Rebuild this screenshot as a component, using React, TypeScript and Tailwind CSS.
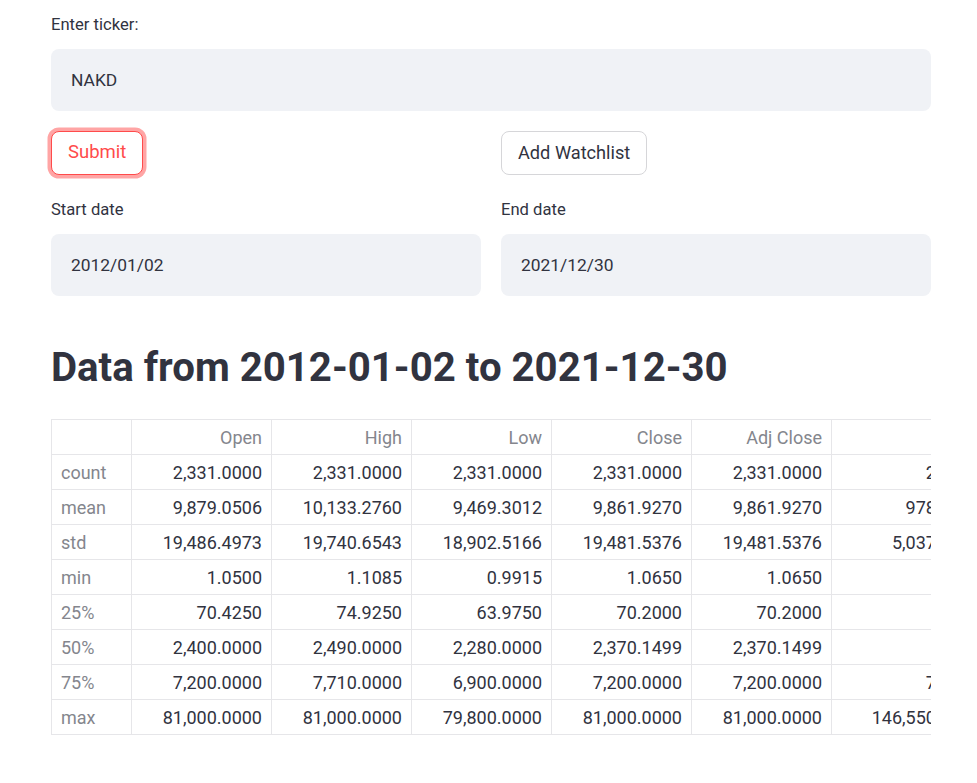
import React from 'react';

const rows: [string, string[]][] = [
  ['count', ['2,331.0000', '2,331.0000', '2,331.0000', '2,331.0000', '2,331.0000', '2,331.0000']],
  ['mean', ['9,879.0506', '10,133.2760', '9,469.3012', '9,861.9270', '9,861.9270', '978,516.7889']],
  ['std', ['19,486.4973', '19,740.6543', '18,902.5166', '19,481.5376', '19,481.5376', '5,037,219.4406']],
  ['min', ['1.0500', '1.1085', '0.9915', '1.0650', '1.0650', '0.0000']],
  ['25%', ['70.4250', '74.9250', '63.9750', '70.2000', '70.2000', '200.0000']],
  ['50%', ['2,400.0000', '2,490.0000', '2,280.0000', '2,370.1499', '2,370.1499', '900.0000']],
  ['75%', ['7,200.0000', '7,710.0000', '6,900.0000', '7,200.0000', '7,200.0000', '7,250.0000']],
  ['max', ['81,000.0000', '81,000.0000', '79,800.0000', '81,000.0000', '81,000.0000', '146,550,000.0000']],
];

const columns = ['Open', 'High', 'Low', 'Close', 'Adj Close', 'Volume'];

const Field = ({ label, value }: { label: string; value: string }) => (
  <div>
    <div className="h-[22px] text-[16.6px] leading-[22px] mb-[13px]">{label}</div>
    <div className="h-[62px] rounded-[8px] bg-[#f0f2f6] pl-[20px] flex items-center text-[17.4px]">{value}</div>
  </div>
);

export default function App() {
  return (
    <div className="w-[977px] min-h-[783px] bg-white text-[#31333f] font-['Roboto',sans-serif] pl-[51px] pr-[46px] pt-[14px]">
      <Field label="Enter ticker:" value="NAKD" />

      <div className="grid grid-cols-2 gap-[20px] mt-[20px]">
        <div>
          <button className="h-[44px] px-[16px] rounded-[8px] border border-[#ff4b4b] text-[#ff4b4b] text-[18.5px] bg-white shadow-[0_0_0_3.5px_rgba(255,75,75,0.5)]">
            Submit
          </button>
        </div>
        <div>
          <button className="h-[44px] px-[16px] rounded-[8px] border border-[#d6d6d9] text-[18.2px] bg-white">
            Add Watchlist
          </button>
        </div>
      </div>

      <div className="grid grid-cols-2 gap-[20px] mt-[24px]">
        <Field label="Start date" value="2012/01/02" />
        <Field label="End date" value="2021/12/30" />
      </div>

      <h2 className="mt-[45px] text-[40.2px] leading-[54px] font-bold">
        Data from 2012-01-02 to 2021-12-30
      </h2>

      <div className="mt-[24px] w-[880px] overflow-hidden">
        <table className="table-fixed border-collapse text-[18px] w-[973px]">
          <colgroup>
            <col className="w-[80px]" />
            <col className="w-[140px]" />
            <col className="w-[140px]" />
            <col className="w-[140px]" />
            <col className="w-[140px]" />
            <col className="w-[140px]" />
            <col className="w-[193px]" />
          </colgroup>
          <thead>
            <tr className="h-[35px]">
              <th className="border border-[#e6e6e9]" />
              {columns.map((c) => (
                <th key={c} className="border border-[#e6e6e9] px-[9px] text-right font-normal text-[#84868d] whitespace-nowrap">
                  {c}
                </th>
              ))}
            </tr>
          </thead>
          <tbody>
            {rows.map(([name, vals]) => (
              <tr key={name} className="h-[35px]">
                <th className="border border-[#e6e6e9] px-[9px] text-left font-normal text-[#84868d]">{name}</th>
                {vals.map((v, i) => (
                  <td key={i} className="border border-[#e6e6e9] px-[9px] text-right whitespace-nowrap">
                    {v}
                  </td>
                ))}
              </tr>
            ))}
          </tbody>
        </table>
      </div>
    </div>
  );
}
